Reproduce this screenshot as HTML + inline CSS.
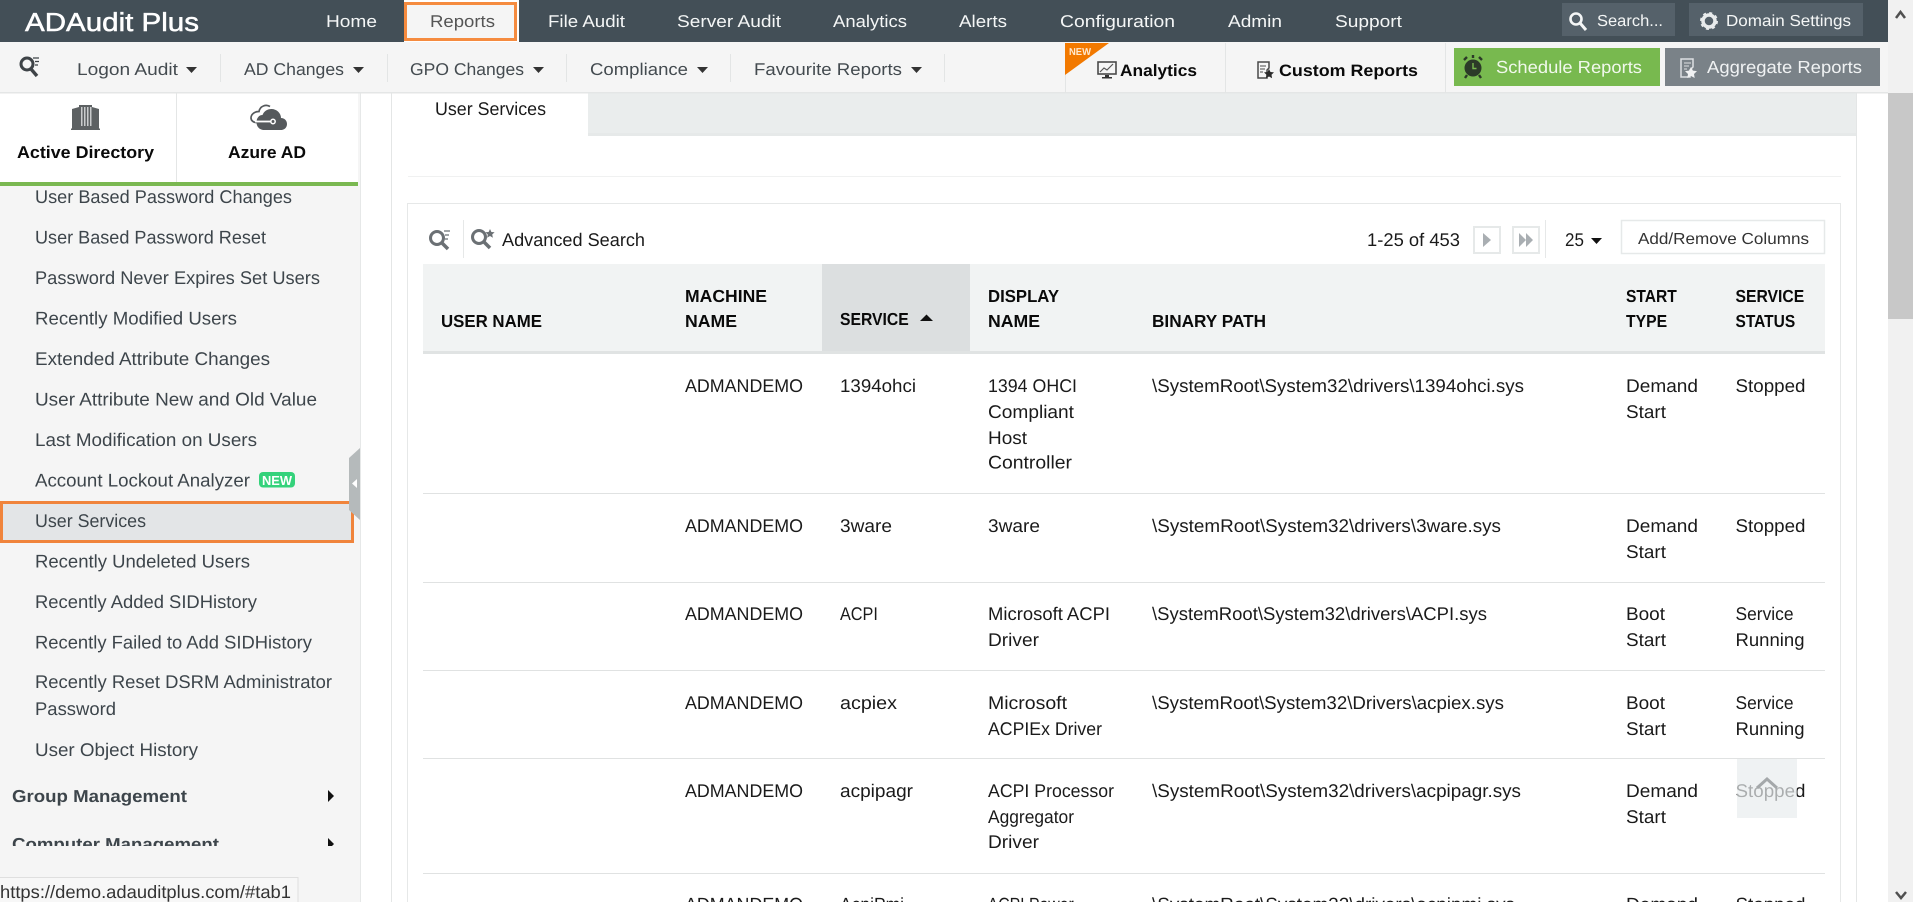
<!DOCTYPE html>
<html><head><meta charset="utf-8"><title>ADAudit Plus</title>
<style>
html,body{margin:0;padding:0;background:#fff;width:1913px;height:902px;overflow:hidden}
svg{display:block;position:absolute;left:0;top:0}
text{font-family:"Liberation Sans",sans-serif;font-size:17px;fill:#1a1a1a;white-space:pre;text-rendering:geometricPrecision}
.n{fill:#f4f6f6;font-size:17px}
.s{fill:#444b50;font-size:17px}
.m{fill:#3d454b;font-size:17px}
.b{font-weight:bold;fill:#0a0a0a;font-size:17px}
.h{font-weight:bold;fill:#0a0a0a;font-size:16px}
</style></head><body>
<svg width="1913" height="902" viewBox="0 0 1913 902" xmlns="http://www.w3.org/2000/svg">
<!-- scrollbar -->
<rect x="1888" y="0" width="25" height="902" fill="#f1f1f1"/>
<rect x="1888" y="93" width="25" height="226" fill="#c8c8c8"/>
<path d="M1896 18l4.500-6 4.500 6" fill="none" stroke="#505050" stroke-width="2.500"/>
<path d="M1896 892l5 6 5-6" fill="none" stroke="#505050" stroke-width="2.500"/>

<!-- content -->
<rect x="391" y="93" width="466" height="809" fill="#fff"/>
<rect x="392" y="93" width="1465" height="42" fill="#eaeded"/>
<rect x="392" y="133" width="1465" height="3" fill="#e6e9e9"/>
<rect x="392" y="93" width="196" height="43" fill="#fff"/>
<rect x="391" y="93" width="1" height="809" fill="#e4e6e6"/>
<rect x="1856" y="93" width="1" height="809" fill="#e4e6e6"/>
<g transform="scale(1 1.08)">
<text x="435" y="106.500" textLength="111" lengthAdjust="spacingAndGlyphs">User Services</text>
<text x="502" y="227.800" textLength="143" lengthAdjust="spacingAndGlyphs">Advanced Search</text>
<text x="1367" y="227.800" textLength="93" lengthAdjust="spacingAndGlyphs">1-25 of 453</text>
<text x="1565" y="227.800" style="font-size:17px">25</text>
</g>
<rect x="408" y="176" width="1433" height="1" fill="#f0f1f1"/>
<rect x="407.500" y="203.500" width="1433" height="720" fill="none" stroke="#e6e8e8"/>

<!-- toolbar -->
<g fill="none" stroke="#6b7074">
<circle cx="437" cy="238" r="6.500" stroke-width="3"/><path d="M442 243l6 6" stroke-width="3.500"/><path d="M444 231h6M445 235h4M445 239h3" stroke-width="1.300"/>
<circle cx="479" cy="237" r="6.500" stroke-width="3"/><path d="M484 242l6 6" stroke-width="3.500"/>
</g>
<path d="M490 229l1.400 3 3.200.300-2.400 2.200.700 3.200-2.900-1.700-2.900 1.700.700-3.200-2.400-2.200 3.200-.300z" fill="#6b7074"/>
<rect x="463" y="220" width="1" height="38" fill="#e6e8e8"/>
<rect x="1474" y="227" width="26" height="26" fill="#fff" stroke="#e6e9e9" stroke-width="2"/>
<path d="M1483 233l8 7-8 7z" fill="#a9aeb2"/>
<rect x="1513" y="227" width="26" height="26" fill="#fff" stroke="#e6e9e9" stroke-width="2"/>
<path d="M1519 233l7 7-7 7zM1526 233l7 7-7 7z" fill="#a9aeb2"/>
<rect x="1545" y="220" width="1" height="38" fill="#e6e8e8"/>
<path d="M1591 238h11l-5.500 6z" fill="#111"/>
<rect x="1621.500" y="220.500" width="203" height="33" fill="#fff" stroke="#e6e9e9" stroke-width="1.500"/>
<text x="1638" y="244" textLength="171" lengthAdjust="spacingAndGlyphs" style="font-size:16px;fill:#333">Add/Remove Columns</text>

<!-- table head -->
<rect x="423" y="264" width="1402" height="87" fill="#f1f3f3"/>
<rect x="822" y="264" width="148" height="87" fill="#dcdfe0"/>
<rect x="423" y="351" width="1402" height="3" fill="#e0e3e3"/>
<g transform="scale(1 1.09)">
<text class="h" x="441" y="300" textLength="101" lengthAdjust="spacingAndGlyphs">USER NAME</text>
<text class="h" x="685" y="277" textLength="82" lengthAdjust="spacingAndGlyphs">MACHINE</text>
<text class="h" x="685" y="300" textLength="52" lengthAdjust="spacingAndGlyphs">NAME</text>
<text class="h" x="854.500" y="298.200" transform="scale(.983 1)">SERVICE</text>
<text class="h" x="988" y="277" textLength="71" lengthAdjust="spacingAndGlyphs">DISPLAY</text>
<text class="h" x="988" y="300" textLength="52" lengthAdjust="spacingAndGlyphs">NAME</text>
<text class="h" x="1152" y="300" textLength="114" lengthAdjust="spacingAndGlyphs">BINARY PATH</text>
<text class="h" x="1667.700" y="277" transform="scale(.975 1)">START</text>
<text class="h" x="1652.400" y="300" transform="scale(.984 1)">TYPE</text>
<text class="h" x="1765.500" y="277" transform="scale(.983 1)">SERVICE</text>
<text class="h" x="1791" y="300" transform="scale(.969 1)">STATUS</text>
</g>
<path d="M920 321l6.500-6.500 6.500 6.500z" fill="#111"/>

<!-- row separators -->
<g fill="#e0e2e2">
<rect x="423" y="493" width="1402" height="1"/><rect x="423" y="582" width="1402" height="1"/>
<rect x="423" y="670" width="1402" height="1"/><rect x="423" y="758" width="1402" height="1"/>
<rect x="423" y="873" width="1402" height="1"/>
</g>

<!-- row 1 -->
<g transform="translate(0 392) scale(1 1.08)">
<text x="685" y="0" textLength="118" lengthAdjust="spacingAndGlyphs">ADMANDEMO</text>
<text x="840" y="0" textLength="76" lengthAdjust="spacingAndGlyphs">1394ohci</text>
<text x="988" y="0" textLength="89" lengthAdjust="spacingAndGlyphs">1394 OHCI</text>
<text x="988" y="24" textLength="86" lengthAdjust="spacingAndGlyphs">Compliant</text>
<text x="988" y="48" textLength="39" lengthAdjust="spacingAndGlyphs">Host</text>
<text x="988" y="71" textLength="84" lengthAdjust="spacingAndGlyphs">Controller</text>
<text x="1152" y="0" textLength="372" lengthAdjust="spacingAndGlyphs">\SystemRoot\System32\drivers\1394ohci.sys</text>
<text x="1626" y="0" textLength="72" lengthAdjust="spacingAndGlyphs">Demand</text>
<text x="1626" y="24" textLength="40" lengthAdjust="spacingAndGlyphs">Start</text>
<text x="1735.500" y="0" textLength="70" lengthAdjust="spacingAndGlyphs">Stopped</text>
</g>
<!-- row 2 -->
<g transform="translate(0 532) scale(1 1.08)">
<text x="685" y="0" textLength="118" lengthAdjust="spacingAndGlyphs">ADMANDEMO</text>
<text x="840" y="0" textLength="52" lengthAdjust="spacingAndGlyphs">3ware</text>
<text x="988" y="0" textLength="52" lengthAdjust="spacingAndGlyphs">3ware</text>
<text x="1152" y="0" textLength="349" lengthAdjust="spacingAndGlyphs">\SystemRoot\System32\drivers\3ware.sys</text>
<text x="1626" y="0" textLength="72" lengthAdjust="spacingAndGlyphs">Demand</text>
<text x="1626" y="24" textLength="40" lengthAdjust="spacingAndGlyphs">Start</text>
<text x="1735.500" y="0" textLength="70" lengthAdjust="spacingAndGlyphs">Stopped</text>
</g>
<!-- row 3 -->
<g transform="translate(0 620) scale(1 1.08)">
<text x="685" y="0" textLength="118" lengthAdjust="spacingAndGlyphs">ADMANDEMO</text>
<text x="877.700" y="0" transform="scale(.957 1)">ACPI</text>
<text x="988" y="0" textLength="122" lengthAdjust="spacingAndGlyphs">Microsoft ACPI</text>
<text x="988" y="24" textLength="51" lengthAdjust="spacingAndGlyphs">Driver</text>
<text x="1152" y="0" textLength="335" lengthAdjust="spacingAndGlyphs">\SystemRoot\System32\drivers\ACPI.sys</text>
<text x="1626" y="0" textLength="39" lengthAdjust="spacingAndGlyphs">Boot</text>
<text x="1626" y="24" textLength="40" lengthAdjust="spacingAndGlyphs">Start</text>
<text x="1735.500" y="0" textLength="58" lengthAdjust="spacingAndGlyphs">Service</text>
<text x="1735.500" y="24" textLength="69" lengthAdjust="spacingAndGlyphs">Running</text>
</g>
<!-- row 4 -->
<g transform="translate(0 709) scale(1 1.08)">
<text x="685" y="0" textLength="118" lengthAdjust="spacingAndGlyphs">ADMANDEMO</text>
<text x="840" y="0" textLength="57" lengthAdjust="spacingAndGlyphs">acpiex</text>
<text x="988" y="0" textLength="79" lengthAdjust="spacingAndGlyphs">Microsoft</text>
<text x="988" y="24" textLength="114" lengthAdjust="spacingAndGlyphs">ACPIEx Driver</text>
<text x="1152" y="0" textLength="352" lengthAdjust="spacingAndGlyphs">\SystemRoot\System32\Drivers\acpiex.sys</text>
<text x="1626" y="0" textLength="39" lengthAdjust="spacingAndGlyphs">Boot</text>
<text x="1626" y="24" textLength="40" lengthAdjust="spacingAndGlyphs">Start</text>
<text x="1735.500" y="0" textLength="58" lengthAdjust="spacingAndGlyphs">Service</text>
<text x="1735.500" y="24" textLength="69" lengthAdjust="spacingAndGlyphs">Running</text>
</g>
<!-- row 5 -->
<g transform="translate(0 797) scale(1 1.08)">
<text x="685" y="0" textLength="118" lengthAdjust="spacingAndGlyphs">ADMANDEMO</text>
<text x="840" y="0" textLength="73" lengthAdjust="spacingAndGlyphs">acpipagr</text>
<text x="988" y="0" textLength="126" lengthAdjust="spacingAndGlyphs">ACPI Processor</text>
<text x="988" y="24" textLength="86" lengthAdjust="spacingAndGlyphs">Aggregator</text>
<text x="988" y="47" textLength="51" lengthAdjust="spacingAndGlyphs">Driver</text>
<text x="1152" y="0" textLength="369" lengthAdjust="spacingAndGlyphs">\SystemRoot\System32\drivers\acpipagr.sys</text>
<text x="1626" y="0" textLength="72" lengthAdjust="spacingAndGlyphs">Demand</text>
<text x="1626" y="24" textLength="40" lengthAdjust="spacingAndGlyphs">Start</text>
<text x="1735.500" y="0" textLength="70" lengthAdjust="spacingAndGlyphs">Stopped</text>
</g>
<!-- row 6 -->
<g transform="translate(0 910.500) scale(1 1.08)">
<text x="685" y="0" textLength="118" lengthAdjust="spacingAndGlyphs">ADMANDEMO</text>
<text x="840" y="0" textLength="64" lengthAdjust="spacingAndGlyphs">AcpiPmi</text>
<text x="1062" y="0" transform="scale(.93 1)">ACPI Power</text>
<text x="1152" y="0" textLength="363" lengthAdjust="spacingAndGlyphs">\SystemRoot\System32\drivers\acpipmi.sys</text>
<text x="1626" y="0" textLength="72" lengthAdjust="spacingAndGlyphs">Demand</text>
<text x="1735.500" y="0" textLength="70" lengthAdjust="spacingAndGlyphs">Stopped</text>
</g>

<!-- back to top -->
<rect x="1737" y="759" width="60" height="59" fill="#e8ecee" fill-opacity=".7"/>
<path d="M1757 788l10-9 10 9" fill="none" stroke="#a4a8aa" stroke-width="3"/>

<!-- sidebar -->
<rect x="0" y="93" width="360" height="809" fill="#f5f5f5"/>
<rect x="360" y="93" width="1" height="809" fill="#e6e8e8"/>
<rect x="259" y="472" width="36" height="15.500" rx="4" fill="#34d27b"/>
<text x="262" y="485" textLength="30" lengthAdjust="spacingAndGlyphs" style="font-size:13px;font-weight:bold;fill:#fff">NEW</text>
<rect x="1.500" y="502.500" width="351" height="39" fill="#e3e5e7" stroke="#f0843c" stroke-width="3"/>
<g transform="scale(1 1.08)">
<text class="m" x="35" y="188" textLength="257" lengthAdjust="spacingAndGlyphs">User Based Password Changes</text>
<text class="m" x="35" y="225.500" textLength="231" lengthAdjust="spacingAndGlyphs">User Based Password Reset</text>
<text class="m" x="35" y="263" textLength="285" lengthAdjust="spacingAndGlyphs">Password Never Expires Set Users</text>
<text class="m" x="35" y="300.500" textLength="202" lengthAdjust="spacingAndGlyphs">Recently Modified Users</text>
<text class="m" x="35" y="338" textLength="235" lengthAdjust="spacingAndGlyphs">Extended Attribute Changes</text>
<text class="m" x="35" y="375.500" textLength="282" lengthAdjust="spacingAndGlyphs">User Attribute New and Old Value</text>
<text class="m" x="35" y="413" textLength="222" lengthAdjust="spacingAndGlyphs">Last Modification on Users</text>
<text class="m" x="35" y="450.500" textLength="215" lengthAdjust="spacingAndGlyphs">Account Lockout Analyzer</text>
<text class="m" x="35" y="488" textLength="111" lengthAdjust="spacingAndGlyphs">User Services</text>
<text class="m" x="35" y="525.500" textLength="215" lengthAdjust="spacingAndGlyphs">Recently Undeleted Users</text>
<text class="m" x="35" y="563" textLength="222" lengthAdjust="spacingAndGlyphs">Recently Added SIDHistory</text>
<text class="m" x="35" y="600.500" textLength="277" lengthAdjust="spacingAndGlyphs">Recently Failed to Add SIDHistory</text>
<text class="m" x="35" y="637" textLength="297" lengthAdjust="spacingAndGlyphs">Recently Reset DSRM Administrator</text>
<text class="m" x="35" y="662" textLength="81" lengthAdjust="spacingAndGlyphs">Password</text>
<text class="m" x="35" y="700" textLength="163" lengthAdjust="spacingAndGlyphs">User Object History</text>
<text class="m" x="12" y="742.600" textLength="175" lengthAdjust="spacingAndGlyphs" style="font-weight:bold;font-size:16px">Group Management</text>
<text class="m" x="12" y="787" textLength="207" lengthAdjust="spacingAndGlyphs" style="font-weight:bold;font-size:16px">Computer Management</text>
</g>
<path d="M328 790l6 6-6 6z" fill="#111"/>
<path d="M328 838l6 6-6 6z" fill="#111"/>
<rect x="0" y="846" width="360" height="56" fill="#f5f5f5"/>
<path d="M360 448v72l-11-10v-52z" fill="#b5babb"/>
<path d="M357 479v9l-5-4.500z" fill="#fff"/>

<!-- status tooltip -->
<rect x="-1" y="877.500" width="299" height="26" fill="#f7f7f7" stroke="#dfdfdf"/>
<text x="0" y="898" textLength="291" lengthAdjust="spacingAndGlyphs" style="fill:#333;font-size:18px">https://demo.adauditplus.com/#tab1</text>

<!-- sidebar tabs -->
<rect x="0" y="93" width="358" height="90" fill="#fff"/>
<rect x="176" y="93" width="1" height="90" fill="#e4e6e6"/>
<rect x="0" y="182" width="358" height="4" fill="#7ab851"/>
<path d="M71 130v-1l1-1v-19l7-2v-2l1 0h11l1 0v2l7 2v19l1 1v1z" fill="#5d6163"/>
<g fill="#c9cbcc"><rect x="81" y="107" width="1.500" height="19"/><rect x="84" y="107" width="1.500" height="19"/><rect x="87" y="107" width="1.500" height="19"/><rect x="90" y="107" width="1.500" height="19"/></g>
<path d="M264 130h17c3.500 0 6-2.600 6-6s-2.500-6-6-6c0-5-4.500-9-9.500-9-4 0-7.500 2-9 6-3.500 0-6 3-6 7.500 0 4 3 7.500 7.500 7.500z" fill="#55595c"/>
<path d="M270 106.500c-4-2.500-10-.5-11 5-4.500 0-8 2.800-8 6.500 0 3 3 4.500 5.500 4.500" fill="none" stroke="#55595c" stroke-width="1.700"/>
<path d="M255 121.500h16" stroke="#fff" stroke-width="1.800" fill="none"/><circle cx="273" cy="121.500" r="2.200" fill="#55595c" stroke="#fff" stroke-width="1.500"/>
<text class="b" x="17" y="158" textLength="137" lengthAdjust="spacingAndGlyphs">Active Directory</text>
<text class="b" x="228" y="158" textLength="78" lengthAdjust="spacingAndGlyphs">Azure AD</text>

<!-- second bar -->
<rect x="0" y="42" width="1888" height="50" fill="#f5f5f5"/>
<rect x="0" y="92" width="1888" height="1.500" fill="#e4e6e6"/>
<g fill="none" stroke="#3e4347">
<circle cx="27" cy="64" r="6" stroke-width="3"/><path d="M31 69l6 7" stroke-width="3.400"/><path d="M33 58h6M35 61.500h4M35 65h3" stroke-width="1.300"/>
</g>
<g fill="#e3e5e5"><rect x="220" y="54" width="1" height="28"/><rect x="387" y="54" width="1" height="28"/><rect x="566" y="54" width="1" height="28"/><rect x="730" y="54" width="1" height="28"/><rect x="944" y="54" width="1" height="28"/><rect x="1225" y="43" width="1" height="50"/><rect x="1445" y="43" width="1" height="50"/><rect x="1065" y="43" width="1" height="50"/></g>
<text class="s" x="77" y="75" textLength="101" lengthAdjust="spacingAndGlyphs">Logon Audit</text><path d="M186 67h11l-5.500 6z" fill="#333"/>
<text class="s" x="244" y="75" textLength="100" lengthAdjust="spacingAndGlyphs">AD Changes</text><path d="M353 67h11l-5.500 6z" fill="#333"/>
<text class="s" x="410" y="75" textLength="114" lengthAdjust="spacingAndGlyphs">GPO Changes</text><path d="M533 67h11l-5.500 6z" fill="#333"/>
<text class="s" x="590" y="75" textLength="98" lengthAdjust="spacingAndGlyphs">Compliance</text><path d="M697 67h11l-5.500 6z" fill="#333"/>
<text class="s" x="754" y="75" textLength="148" lengthAdjust="spacingAndGlyphs">Favourite Reports</text><path d="M911 67h11l-5.500 6z" fill="#333"/>
<path d="M1065 43h44l-44 32z" fill="#f27900"/>
<text x="1069" y="55" textLength="22" lengthAdjust="spacingAndGlyphs" style="font-size:10px;font-weight:bold;fill:#ffe9d0">NEW</text>
<rect x="1098" y="62" width="18" height="12" fill="#f5f5f5" stroke="#4a4a4a" stroke-width="1.600"/>
<path d="M1100 72l4-4 3 2 6-6" fill="none" stroke="#555" stroke-width="1.200"/>
<path d="M1105 75h4v2h3v1.500h-10V77h3z" fill="#333"/>
<text x="1120" y="76" textLength="77" lengthAdjust="spacingAndGlyphs" style="font-weight:bold;fill:#0a0a0a;font-size:16.500px">Analytics</text>
<path d="M1258 62h11v6l-2 2v8h-9z" fill="#f5f5f5" stroke="#4a4a4a" stroke-width="1.500"/>
<path d="M1260 66h6M1260 69h5M1260 72h3" stroke="#4a4a4a" stroke-width="1"/>
<path d="M1269 69l1.500 3 3.500.400-2.500 2.400.600 3.400-3.100-1.700-3.100 1.700.600-3.400-2.500-2.400 3.500-.400z" fill="#2b2b2b"/>
<text x="1279" y="76" textLength="139" lengthAdjust="spacingAndGlyphs" style="font-weight:bold;fill:#0a0a0a;font-size:16.500px">Custom Reports</text>
<rect x="1454" y="48" width="206" height="38" fill="#78b94f"/>
<circle cx="1473" cy="68" r="8.500" fill="#2c3a28"/>
<path d="M1464 60l3-3M1482 60l-3-3M1473 58v-3M1467 75l-2 3M1479 75l2 3" stroke="#2c3a28" stroke-width="2.400" fill="none"/>
<path d="M1473 63v5.500h3.500" stroke="#78b94f" stroke-width="1.400" fill="none"/>
<text x="1496" y="73" textLength="146" lengthAdjust="spacingAndGlyphs" style="fill:#f1f8ec;font-size:17.500px">Schedule Reports</text>
<rect x="1665" y="48" width="215" height="38" fill="#7a8288"/>
<path d="M1681 59h12v8l-3 3v7h-9z" fill="none" stroke="#dde0e2" stroke-width="1.500"/>
<path d="M1684 63h7M1684 66h5M1684 69h3" stroke="#dde0e2" stroke-width="1"/>
<path d="M1691 67l1.900 3.600 4.100.500-3 2.900.700 4-3.700-2-3.700 2 .700-4-3-2.900 4.100-.500z" fill="#f0f1f2"/>
<text x="1707" y="73" textLength="155" lengthAdjust="spacingAndGlyphs" style="fill:#f0f2f3;font-size:17.500px">Aggregate Reports</text>

<!-- top bar -->
<rect x="0" y="0" width="1888" height="42" fill="#434f57"/>
<text x="25" y="31" textLength="174" lengthAdjust="spacingAndGlyphs" style="font-size:26px;fill:#fff;stroke:#fff;stroke-width:.5">ADAudit Plus</text>
<rect x="404" y="0" width="115" height="42" fill="#fff"/>
<rect x="405.500" y="3.500" width="110" height="36" fill="#f5f5f5" stroke="#f58b3f" stroke-width="3"/>
<text class="n" x="326" y="27" textLength="51" lengthAdjust="spacingAndGlyphs">Home</text>
<text x="430" y="27" textLength="65" lengthAdjust="spacingAndGlyphs" style="fill:#555">Reports</text>
<text class="n" x="548" y="27" textLength="77" lengthAdjust="spacingAndGlyphs">File Audit</text>
<text class="n" x="677" y="27" textLength="104" lengthAdjust="spacingAndGlyphs">Server Audit</text>
<text class="n" x="833" y="27" textLength="74" lengthAdjust="spacingAndGlyphs">Analytics</text>
<text class="n" x="959" y="27" textLength="48" lengthAdjust="spacingAndGlyphs">Alerts</text>
<text class="n" x="1060" y="27" textLength="115" lengthAdjust="spacingAndGlyphs">Configuration</text>
<text class="n" x="1228" y="27" textLength="54" lengthAdjust="spacingAndGlyphs">Admin</text>
<text class="n" x="1335" y="27" textLength="67" lengthAdjust="spacingAndGlyphs">Support</text>
<rect x="1562" y="3" width="113" height="33" fill="#55616a"/>
<rect x="1689" y="3" width="174" height="33" fill="#55616a"/>
<circle cx="1576" cy="19" r="5.500" fill="none" stroke="#f4f6f6" stroke-width="2.600"/>
<path d="M1580 23l6 7" stroke="#f4f6f6" stroke-width="3"/>
<circle cx="1709" cy="21" r="6" fill="none" stroke="#e8ebec" stroke-width="3.500"/>
<circle cx="1709" cy="21" r="8" fill="none" stroke="#e8ebec" stroke-width="2" stroke-dasharray="3 3.280"/>
<text class="n" x="1597" y="26" textLength="66" lengthAdjust="spacingAndGlyphs" style="font-size:16px">Search...</text>
<text class="n" x="1726" y="26" textLength="125" lengthAdjust="spacingAndGlyphs" style="font-size:16px">Domain Settings</text>
</svg>
</body></html>
